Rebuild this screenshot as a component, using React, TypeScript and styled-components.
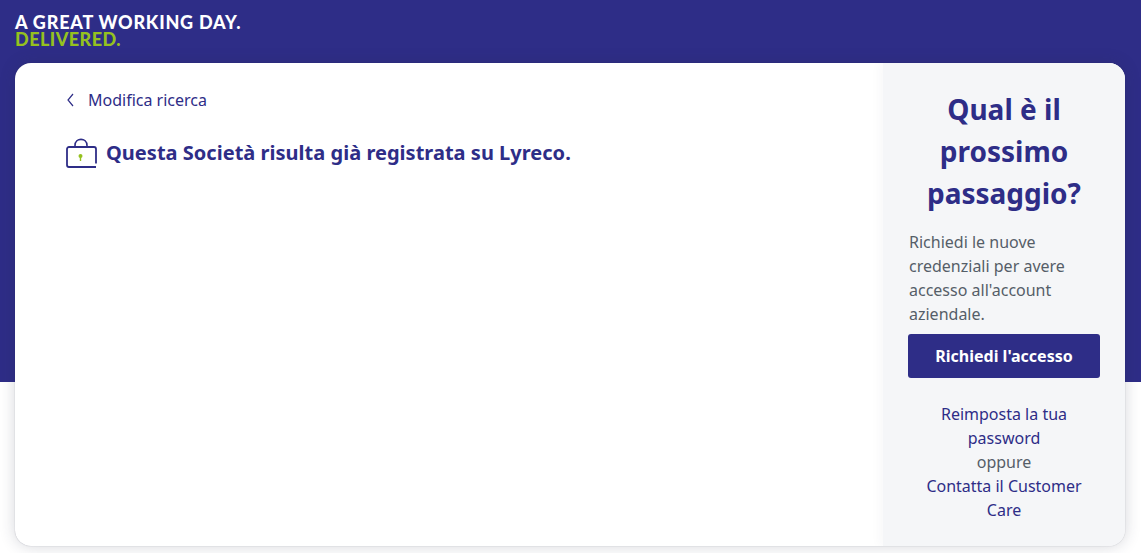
import styled, { createGlobalStyle } from "styled-components";

const GlobalStyle = createGlobalStyle`
  html, body {
    margin: 0;
    padding: 0;
    background: #fff;
    font-family: "Noto Sans", "Open Sans", sans-serif;
  }
  * {
    box-sizing: border-box;
  }
`;

const App = (): JSX.Element => {
  return (
    <Page>
      <GlobalStyle />
      <Header>
        <Slogan>A GREAT WORKING DAY.</Slogan>
        <SloganGreen>DELIVERED.</SloganGreen>
      </Header>
      <Card>
        <Main>
          <BackLink href="#">
            <svg width="10" height="14" viewBox="0 0 10 14" fill="none">
              <path d="M8 1 L3 7 L8 13" stroke="#2e2d87" strokeWidth="1.2" />
            </svg>
            Modifica ricerca
          </BackLink>
          <Title>
            <svg width="31" height="30" viewBox="0 0 31 30" fill="none">
              <path d="M9 9 V7.5 C9 -0.7 21 -0.7 21 7.5 V9" stroke="#2e2d87" strokeWidth="1.6" />
              <path
                d="M30 25.5 V11 a2 2 0 0 0 -2 -2 H3 a2 2 0 0 0 -2 2 V27 a2 2 0 0 0 2 2 H30"
                stroke="#2e2d87"
                strokeWidth="1.8"
              />
              <circle cx="14.5" cy="18" r="2" fill="#95c11f" />
              <rect x="13.8" y="18.5" width="1.4" height="4.5" fill="#95c11f" />
            </svg>
            Questa Società risulta già registrata su Lyreco.
          </Title>
        </Main>
        <Side>
          <SideTitle>Qual è il prossimo passaggio?</SideTitle>
          <SideText>
            Richiedi le nuove credenziali per avere accesso all'account aziendale.
          </SideText>
          <PrimaryButton>Richiedi l'accesso</PrimaryButton>
          <SideLinks>
            <SideLink href="#">Reimposta la tua password</SideLink>
            <div>oppure</div>
            <SideLink href="#">Contatta il Customer Care</SideLink>
          </SideLinks>
        </Side>
      </Card>
    </Page>
  );
};

export default App;

const Page = styled.div`
  height: 553px;
  overflow: hidden;
  padding: 0 16px 7px 15px;
  background: linear-gradient(#2e2d87 382px, #fff 382px);
`;

const Header = styled.div`
  height: 63px;
  padding-top: 14px;
  font-family: "Lato", sans-serif;
  font-weight: 900;
  font-size: 18px;
  line-height: 17px;
`;

const Slogan = styled.div`
  color: #fff;
  letter-spacing: 0.78px;
`;

const SloganGreen = styled.div`
  color: #95c11f;
  letter-spacing: 0.45px;
`;

const Card = styled.div`
  display: flex;
  height: 483px;
  background: #fff;
  border-radius: 16px;
  overflow: hidden;
  box-shadow: 0 0 16px rgba(40, 45, 70, 0.2), 0 0 1px rgba(40, 45, 70, 0.4);
`;

const Main = styled.div`
  flex: 1;
  padding: 25px 50px;
`;

const BackLink = styled.a`
  display: flex;
  align-items: center;
  gap: 13px;
  height: 24px;
  color: #2e2d87;
  font-size: 16px;
  line-height: 24px;
  text-decoration: none;
`;

const Title = styled.h1`
  display: flex;
  align-items: center;
  gap: 9px;
  margin: 25px 0 0 1px;
  color: #2e2d87;
  font-size: 20px;
  font-weight: 700;
  line-height: 32px;
  letter-spacing: 0.02px;
`;

const Side = styled.div`
  display: flex;
  flex-direction: column;
  width: 242px;
  padding: 25px 25px 0;
  background: #f5f6f8;
  box-shadow: -3px 0 10px rgba(40, 45, 70, 0.04);
`;

const SideTitle = styled.h2`
  margin: 0 0 16px;
  color: #2e2d87;
  font-size: 28px;
  font-weight: 700;
  line-height: 42px;
  text-align: center;
`;

const SideText = styled.p`
  margin: 0 0 8px;
  padding-left: 1px;
  color: #555e68;
  font-size: 16px;
  line-height: 24px;
`;

const PrimaryButton = styled.button`
  height: 44px;
  border: 0;
  border-radius: 3px;
  background: #2e2d87;
  color: #fff;
  font-family: inherit;
  font-size: 16px;
  font-weight: 700;
`;

const SideLinks = styled.div`
  margin-top: 24px;
  color: #555e68;
  font-size: 16px;
  line-height: 24px;
  text-align: center;
`;

const SideLink = styled.a`
  display: block;
  color: #2e2d87;
  text-decoration: none;
`;
